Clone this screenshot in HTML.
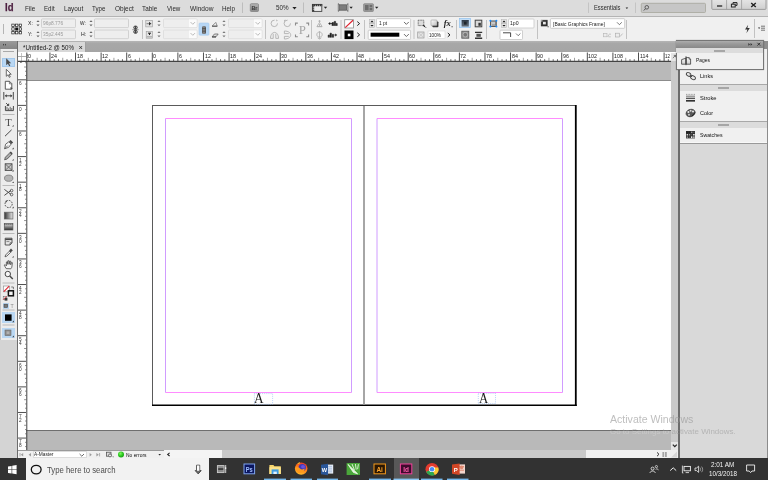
<!DOCTYPE html><html><head><meta charset="utf-8"><title>Untitled-2 @ 50% - InDesign</title><style>
*{box-sizing:border-box;margin:0;padding:0}
html,body{width:768px;height:480px;overflow:hidden;background:#fff}
body{position:relative;font-family:"Liberation Sans",sans-serif;font-size:7px;color:#222;line-height:1}
.a{position:absolute}
.t{position:absolute;white-space:nowrap;line-height:1;transform-origin:0 50%}
.s{font-family:"Liberation Serif",serif}
svg{position:absolute;overflow:visible}
#app{position:absolute;left:0;top:0;width:768px;height:480px;overflow:hidden;will-change:transform}
</style></head><body><div id="app">
<div class="a" style="left:0px;top:0px;width:768px;height:16px;background:#dcdcdc;"></div>
<div class="a" style="left:0px;top:15.9px;width:768px;height:24.9px;background:#f0f0f0;border-top:1px solid #b4b4b4;"></div>
<div class="a" style="left:0px;top:40.8px;width:768px;height:11.6px;background:#a6a6a6;background:linear-gradient(#b6b6b6,#a8a8a8 22%,#a5a5a5);"></div>
<div class="a" style="left:26px;top:61px;width:645px;height:20px;background:#b9b9b9;"></div>
<div class="a" style="left:26px;top:80px;width:645px;height:1px;background:#8c8c8c;"></div>
<div class="a" style="left:26px;top:81px;width:645px;height:350px;background:#ffffff;"></div>
<div class="a" style="left:26px;top:430px;width:645px;height:20px;background:#b9b9b9;border-top:1px solid #6e6e6e;"></div>
<div class="a" style="left:18px;top:52.5px;width:652.6px;height:9px;background:#ffffff;"></div>
<div class="a" style="left:17.8px;top:52.5px;width:8.7px;height:397.5px;background:#ffffff;"></div>
<svg style="left:0px;top:0px;" width="768" height="480" viewBox="0 0 768 480"><line x1="28.62" y1="59.2" x2="28.62" y2="61" stroke="#444" stroke-width="0.8"/><line x1="32.88" y1="59.2" x2="32.88" y2="61" stroke="#444" stroke-width="0.8"/><line x1="37.15" y1="57.8" x2="37.15" y2="61" stroke="#888" stroke-width="0.8"/><line x1="41.41" y1="59.2" x2="41.41" y2="61" stroke="#444" stroke-width="0.8"/><line x1="45.68" y1="59.2" x2="45.68" y2="61" stroke="#444" stroke-width="0.8"/><line x1="49.94" y1="52.5" x2="49.94" y2="61" stroke="#505050" stroke-width="1"/><line x1="54.21" y1="59.2" x2="54.21" y2="61" stroke="#444" stroke-width="0.8"/><line x1="58.47" y1="59.2" x2="58.47" y2="61" stroke="#444" stroke-width="0.8"/><line x1="62.74" y1="57.8" x2="62.74" y2="61" stroke="#888" stroke-width="0.8"/><line x1="67.00" y1="59.2" x2="67.00" y2="61" stroke="#444" stroke-width="0.8"/><line x1="71.27" y1="59.2" x2="71.27" y2="61" stroke="#444" stroke-width="0.8"/><line x1="75.53" y1="52.5" x2="75.53" y2="61" stroke="#505050" stroke-width="1"/><line x1="79.80" y1="59.2" x2="79.80" y2="61" stroke="#444" stroke-width="0.8"/><line x1="84.06" y1="59.2" x2="84.06" y2="61" stroke="#444" stroke-width="0.8"/><line x1="88.33" y1="57.8" x2="88.33" y2="61" stroke="#888" stroke-width="0.8"/><line x1="92.59" y1="59.2" x2="92.59" y2="61" stroke="#444" stroke-width="0.8"/><line x1="96.86" y1="59.2" x2="96.86" y2="61" stroke="#444" stroke-width="0.8"/><line x1="101.12" y1="52.5" x2="101.12" y2="61" stroke="#505050" stroke-width="1"/><line x1="105.39" y1="59.2" x2="105.39" y2="61" stroke="#444" stroke-width="0.8"/><line x1="109.65" y1="59.2" x2="109.65" y2="61" stroke="#444" stroke-width="0.8"/><line x1="113.92" y1="57.8" x2="113.92" y2="61" stroke="#888" stroke-width="0.8"/><line x1="118.18" y1="59.2" x2="118.18" y2="61" stroke="#444" stroke-width="0.8"/><line x1="122.45" y1="59.2" x2="122.45" y2="61" stroke="#444" stroke-width="0.8"/><line x1="126.71" y1="52.5" x2="126.71" y2="61" stroke="#505050" stroke-width="1"/><line x1="130.97" y1="59.2" x2="130.97" y2="61" stroke="#444" stroke-width="0.8"/><line x1="135.24" y1="59.2" x2="135.24" y2="61" stroke="#444" stroke-width="0.8"/><line x1="139.50" y1="57.8" x2="139.50" y2="61" stroke="#888" stroke-width="0.8"/><line x1="143.77" y1="59.2" x2="143.77" y2="61" stroke="#444" stroke-width="0.8"/><line x1="148.03" y1="59.2" x2="148.03" y2="61" stroke="#444" stroke-width="0.8"/><line x1="152.30" y1="52.5" x2="152.30" y2="61" stroke="#505050" stroke-width="1"/><line x1="156.56" y1="59.2" x2="156.56" y2="61" stroke="#444" stroke-width="0.8"/><line x1="160.83" y1="59.2" x2="160.83" y2="61" stroke="#444" stroke-width="0.8"/><line x1="165.09" y1="57.8" x2="165.09" y2="61" stroke="#888" stroke-width="0.8"/><line x1="169.36" y1="59.2" x2="169.36" y2="61" stroke="#444" stroke-width="0.8"/><line x1="173.62" y1="59.2" x2="173.62" y2="61" stroke="#444" stroke-width="0.8"/><line x1="177.89" y1="52.5" x2="177.89" y2="61" stroke="#505050" stroke-width="1"/><line x1="182.16" y1="59.2" x2="182.16" y2="61" stroke="#444" stroke-width="0.8"/><line x1="186.42" y1="59.2" x2="186.42" y2="61" stroke="#444" stroke-width="0.8"/><line x1="190.69" y1="57.8" x2="190.69" y2="61" stroke="#888" stroke-width="0.8"/><line x1="194.95" y1="59.2" x2="194.95" y2="61" stroke="#444" stroke-width="0.8"/><line x1="199.22" y1="59.2" x2="199.22" y2="61" stroke="#444" stroke-width="0.8"/><line x1="203.48" y1="52.5" x2="203.48" y2="61" stroke="#505050" stroke-width="1"/><line x1="207.75" y1="59.2" x2="207.75" y2="61" stroke="#444" stroke-width="0.8"/><line x1="212.01" y1="59.2" x2="212.01" y2="61" stroke="#444" stroke-width="0.8"/><line x1="216.28" y1="57.8" x2="216.28" y2="61" stroke="#888" stroke-width="0.8"/><line x1="220.54" y1="59.2" x2="220.54" y2="61" stroke="#444" stroke-width="0.8"/><line x1="224.81" y1="59.2" x2="224.81" y2="61" stroke="#444" stroke-width="0.8"/><line x1="229.07" y1="52.5" x2="229.07" y2="61" stroke="#505050" stroke-width="1"/><line x1="233.33" y1="59.2" x2="233.33" y2="61" stroke="#444" stroke-width="0.8"/><line x1="237.60" y1="59.2" x2="237.60" y2="61" stroke="#444" stroke-width="0.8"/><line x1="241.86" y1="57.8" x2="241.86" y2="61" stroke="#888" stroke-width="0.8"/><line x1="246.13" y1="59.2" x2="246.13" y2="61" stroke="#444" stroke-width="0.8"/><line x1="250.39" y1="59.2" x2="250.39" y2="61" stroke="#444" stroke-width="0.8"/><line x1="254.66" y1="52.5" x2="254.66" y2="61" stroke="#505050" stroke-width="1"/><line x1="258.93" y1="59.2" x2="258.93" y2="61" stroke="#444" stroke-width="0.8"/><line x1="263.19" y1="59.2" x2="263.19" y2="61" stroke="#444" stroke-width="0.8"/><line x1="267.46" y1="57.8" x2="267.46" y2="61" stroke="#888" stroke-width="0.8"/><line x1="271.72" y1="59.2" x2="271.72" y2="61" stroke="#444" stroke-width="0.8"/><line x1="275.99" y1="59.2" x2="275.99" y2="61" stroke="#444" stroke-width="0.8"/><line x1="280.25" y1="52.5" x2="280.25" y2="61" stroke="#505050" stroke-width="1"/><line x1="284.51" y1="59.2" x2="284.51" y2="61" stroke="#444" stroke-width="0.8"/><line x1="288.78" y1="59.2" x2="288.78" y2="61" stroke="#444" stroke-width="0.8"/><line x1="293.05" y1="57.8" x2="293.05" y2="61" stroke="#888" stroke-width="0.8"/><line x1="297.31" y1="59.2" x2="297.31" y2="61" stroke="#444" stroke-width="0.8"/><line x1="301.57" y1="59.2" x2="301.57" y2="61" stroke="#444" stroke-width="0.8"/><line x1="305.84" y1="52.5" x2="305.84" y2="61" stroke="#505050" stroke-width="1"/><line x1="310.11" y1="59.2" x2="310.11" y2="61" stroke="#444" stroke-width="0.8"/><line x1="314.37" y1="59.2" x2="314.37" y2="61" stroke="#444" stroke-width="0.8"/><line x1="318.64" y1="57.8" x2="318.64" y2="61" stroke="#888" stroke-width="0.8"/><line x1="322.90" y1="59.2" x2="322.90" y2="61" stroke="#444" stroke-width="0.8"/><line x1="327.17" y1="59.2" x2="327.17" y2="61" stroke="#444" stroke-width="0.8"/><line x1="331.43" y1="52.5" x2="331.43" y2="61" stroke="#505050" stroke-width="1"/><line x1="335.69" y1="59.2" x2="335.69" y2="61" stroke="#444" stroke-width="0.8"/><line x1="339.96" y1="59.2" x2="339.96" y2="61" stroke="#444" stroke-width="0.8"/><line x1="344.23" y1="57.8" x2="344.23" y2="61" stroke="#888" stroke-width="0.8"/><line x1="348.49" y1="59.2" x2="348.49" y2="61" stroke="#444" stroke-width="0.8"/><line x1="352.75" y1="59.2" x2="352.75" y2="61" stroke="#444" stroke-width="0.8"/><line x1="357.02" y1="52.5" x2="357.02" y2="61" stroke="#505050" stroke-width="1"/><line x1="361.28" y1="59.2" x2="361.28" y2="61" stroke="#444" stroke-width="0.8"/><line x1="365.55" y1="59.2" x2="365.55" y2="61" stroke="#444" stroke-width="0.8"/><line x1="369.81" y1="57.8" x2="369.81" y2="61" stroke="#888" stroke-width="0.8"/><line x1="374.08" y1="59.2" x2="374.08" y2="61" stroke="#444" stroke-width="0.8"/><line x1="378.34" y1="59.2" x2="378.34" y2="61" stroke="#444" stroke-width="0.8"/><line x1="382.61" y1="52.5" x2="382.61" y2="61" stroke="#505050" stroke-width="1"/><line x1="386.88" y1="59.2" x2="386.88" y2="61" stroke="#444" stroke-width="0.8"/><line x1="391.14" y1="59.2" x2="391.14" y2="61" stroke="#444" stroke-width="0.8"/><line x1="395.41" y1="57.8" x2="395.41" y2="61" stroke="#888" stroke-width="0.8"/><line x1="399.67" y1="59.2" x2="399.67" y2="61" stroke="#444" stroke-width="0.8"/><line x1="403.94" y1="59.2" x2="403.94" y2="61" stroke="#444" stroke-width="0.8"/><line x1="408.20" y1="52.5" x2="408.20" y2="61" stroke="#505050" stroke-width="1"/><line x1="412.47" y1="59.2" x2="412.47" y2="61" stroke="#444" stroke-width="0.8"/><line x1="416.73" y1="59.2" x2="416.73" y2="61" stroke="#444" stroke-width="0.8"/><line x1="421.00" y1="57.8" x2="421.00" y2="61" stroke="#888" stroke-width="0.8"/><line x1="425.26" y1="59.2" x2="425.26" y2="61" stroke="#444" stroke-width="0.8"/><line x1="429.53" y1="59.2" x2="429.53" y2="61" stroke="#444" stroke-width="0.8"/><line x1="433.79" y1="52.5" x2="433.79" y2="61" stroke="#505050" stroke-width="1"/><line x1="438.06" y1="59.2" x2="438.06" y2="61" stroke="#444" stroke-width="0.8"/><line x1="442.32" y1="59.2" x2="442.32" y2="61" stroke="#444" stroke-width="0.8"/><line x1="446.59" y1="57.8" x2="446.59" y2="61" stroke="#888" stroke-width="0.8"/><line x1="450.85" y1="59.2" x2="450.85" y2="61" stroke="#444" stroke-width="0.8"/><line x1="455.12" y1="59.2" x2="455.12" y2="61" stroke="#444" stroke-width="0.8"/><line x1="459.38" y1="52.5" x2="459.38" y2="61" stroke="#505050" stroke-width="1"/><line x1="463.64" y1="59.2" x2="463.64" y2="61" stroke="#444" stroke-width="0.8"/><line x1="467.91" y1="59.2" x2="467.91" y2="61" stroke="#444" stroke-width="0.8"/><line x1="472.18" y1="57.8" x2="472.18" y2="61" stroke="#888" stroke-width="0.8"/><line x1="476.44" y1="59.2" x2="476.44" y2="61" stroke="#444" stroke-width="0.8"/><line x1="480.70" y1="59.2" x2="480.70" y2="61" stroke="#444" stroke-width="0.8"/><line x1="484.97" y1="52.5" x2="484.97" y2="61" stroke="#505050" stroke-width="1"/><line x1="489.24" y1="59.2" x2="489.24" y2="61" stroke="#444" stroke-width="0.8"/><line x1="493.50" y1="59.2" x2="493.50" y2="61" stroke="#444" stroke-width="0.8"/><line x1="497.77" y1="57.8" x2="497.77" y2="61" stroke="#888" stroke-width="0.8"/><line x1="502.03" y1="59.2" x2="502.03" y2="61" stroke="#444" stroke-width="0.8"/><line x1="506.30" y1="59.2" x2="506.30" y2="61" stroke="#444" stroke-width="0.8"/><line x1="510.56" y1="52.5" x2="510.56" y2="61" stroke="#505050" stroke-width="1"/><line x1="514.83" y1="59.2" x2="514.83" y2="61" stroke="#444" stroke-width="0.8"/><line x1="519.09" y1="59.2" x2="519.09" y2="61" stroke="#444" stroke-width="0.8"/><line x1="523.36" y1="57.8" x2="523.36" y2="61" stroke="#888" stroke-width="0.8"/><line x1="527.62" y1="59.2" x2="527.62" y2="61" stroke="#444" stroke-width="0.8"/><line x1="531.88" y1="59.2" x2="531.88" y2="61" stroke="#444" stroke-width="0.8"/><line x1="536.15" y1="52.5" x2="536.15" y2="61" stroke="#505050" stroke-width="1"/><line x1="540.42" y1="59.2" x2="540.42" y2="61" stroke="#444" stroke-width="0.8"/><line x1="544.68" y1="59.2" x2="544.68" y2="61" stroke="#444" stroke-width="0.8"/><line x1="548.95" y1="57.8" x2="548.95" y2="61" stroke="#888" stroke-width="0.8"/><line x1="553.21" y1="59.2" x2="553.21" y2="61" stroke="#444" stroke-width="0.8"/><line x1="557.48" y1="59.2" x2="557.48" y2="61" stroke="#444" stroke-width="0.8"/><line x1="561.74" y1="52.5" x2="561.74" y2="61" stroke="#505050" stroke-width="1"/><line x1="566.00" y1="59.2" x2="566.00" y2="61" stroke="#444" stroke-width="0.8"/><line x1="570.27" y1="59.2" x2="570.27" y2="61" stroke="#444" stroke-width="0.8"/><line x1="574.53" y1="57.8" x2="574.53" y2="61" stroke="#888" stroke-width="0.8"/><line x1="578.80" y1="59.2" x2="578.80" y2="61" stroke="#444" stroke-width="0.8"/><line x1="583.07" y1="59.2" x2="583.07" y2="61" stroke="#444" stroke-width="0.8"/><line x1="587.33" y1="52.5" x2="587.33" y2="61" stroke="#505050" stroke-width="1"/><line x1="591.59" y1="59.2" x2="591.59" y2="61" stroke="#444" stroke-width="0.8"/><line x1="595.86" y1="59.2" x2="595.86" y2="61" stroke="#444" stroke-width="0.8"/><line x1="600.12" y1="57.8" x2="600.12" y2="61" stroke="#888" stroke-width="0.8"/><line x1="604.39" y1="59.2" x2="604.39" y2="61" stroke="#444" stroke-width="0.8"/><line x1="608.65" y1="59.2" x2="608.65" y2="61" stroke="#444" stroke-width="0.8"/><line x1="612.92" y1="52.5" x2="612.92" y2="61" stroke="#505050" stroke-width="1"/><line x1="617.19" y1="59.2" x2="617.19" y2="61" stroke="#444" stroke-width="0.8"/><line x1="621.45" y1="59.2" x2="621.45" y2="61" stroke="#444" stroke-width="0.8"/><line x1="625.72" y1="57.8" x2="625.72" y2="61" stroke="#888" stroke-width="0.8"/><line x1="629.98" y1="59.2" x2="629.98" y2="61" stroke="#444" stroke-width="0.8"/><line x1="634.25" y1="59.2" x2="634.25" y2="61" stroke="#444" stroke-width="0.8"/><line x1="638.51" y1="52.5" x2="638.51" y2="61" stroke="#505050" stroke-width="1"/><line x1="642.77" y1="59.2" x2="642.77" y2="61" stroke="#444" stroke-width="0.8"/><line x1="647.04" y1="59.2" x2="647.04" y2="61" stroke="#444" stroke-width="0.8"/><line x1="651.30" y1="57.8" x2="651.30" y2="61" stroke="#888" stroke-width="0.8"/><line x1="655.57" y1="59.2" x2="655.57" y2="61" stroke="#444" stroke-width="0.8"/><line x1="659.84" y1="59.2" x2="659.84" y2="61" stroke="#444" stroke-width="0.8"/><line x1="664.10" y1="52.5" x2="664.10" y2="61" stroke="#505050" stroke-width="1"/><line x1="668.37" y1="59.2" x2="668.37" y2="61" stroke="#444" stroke-width="0.8"/><line x1="25.0" y1="62.75" x2="26.4" y2="62.75" stroke="#777" stroke-width="0.8"/><line x1="24.099999999999998" y1="67.02" x2="26.4" y2="67.02" stroke="#777" stroke-width="0.8"/><line x1="25.0" y1="71.28" x2="26.4" y2="71.28" stroke="#777" stroke-width="0.8"/><line x1="25.0" y1="75.55" x2="26.4" y2="75.55" stroke="#777" stroke-width="0.8"/><line x1="18" y1="79.81" x2="26" y2="79.81" stroke="#505050" stroke-width="1"/><line x1="25.0" y1="84.08" x2="26.4" y2="84.08" stroke="#777" stroke-width="0.8"/><line x1="25.0" y1="88.34" x2="26.4" y2="88.34" stroke="#777" stroke-width="0.8"/><line x1="24.099999999999998" y1="92.61" x2="26.4" y2="92.61" stroke="#777" stroke-width="0.8"/><line x1="25.0" y1="96.87" x2="26.4" y2="96.87" stroke="#777" stroke-width="0.8"/><line x1="25.0" y1="101.14" x2="26.4" y2="101.14" stroke="#777" stroke-width="0.8"/><line x1="18" y1="105.40" x2="26" y2="105.40" stroke="#505050" stroke-width="1"/><line x1="25.0" y1="109.67" x2="26.4" y2="109.67" stroke="#777" stroke-width="0.8"/><line x1="25.0" y1="113.93" x2="26.4" y2="113.93" stroke="#777" stroke-width="0.8"/><line x1="24.099999999999998" y1="118.20" x2="26.4" y2="118.20" stroke="#777" stroke-width="0.8"/><line x1="25.0" y1="122.46" x2="26.4" y2="122.46" stroke="#777" stroke-width="0.8"/><line x1="25.0" y1="126.73" x2="26.4" y2="126.73" stroke="#777" stroke-width="0.8"/><line x1="18" y1="130.99" x2="26" y2="130.99" stroke="#505050" stroke-width="1"/><line x1="25.0" y1="135.25" x2="26.4" y2="135.25" stroke="#777" stroke-width="0.8"/><line x1="25.0" y1="139.52" x2="26.4" y2="139.52" stroke="#777" stroke-width="0.8"/><line x1="24.099999999999998" y1="143.78" x2="26.4" y2="143.78" stroke="#777" stroke-width="0.8"/><line x1="25.0" y1="148.05" x2="26.4" y2="148.05" stroke="#777" stroke-width="0.8"/><line x1="25.0" y1="152.31" x2="26.4" y2="152.31" stroke="#777" stroke-width="0.8"/><line x1="18" y1="156.58" x2="26" y2="156.58" stroke="#505050" stroke-width="1"/><line x1="25.0" y1="160.84" x2="26.4" y2="160.84" stroke="#777" stroke-width="0.8"/><line x1="25.0" y1="165.11" x2="26.4" y2="165.11" stroke="#777" stroke-width="0.8"/><line x1="24.099999999999998" y1="169.38" x2="26.4" y2="169.38" stroke="#777" stroke-width="0.8"/><line x1="25.0" y1="173.64" x2="26.4" y2="173.64" stroke="#777" stroke-width="0.8"/><line x1="25.0" y1="177.91" x2="26.4" y2="177.91" stroke="#777" stroke-width="0.8"/><line x1="18" y1="182.17" x2="26" y2="182.17" stroke="#505050" stroke-width="1"/><line x1="25.0" y1="186.44" x2="26.4" y2="186.44" stroke="#777" stroke-width="0.8"/><line x1="25.0" y1="190.70" x2="26.4" y2="190.70" stroke="#777" stroke-width="0.8"/><line x1="24.099999999999998" y1="194.97" x2="26.4" y2="194.97" stroke="#777" stroke-width="0.8"/><line x1="25.0" y1="199.23" x2="26.4" y2="199.23" stroke="#777" stroke-width="0.8"/><line x1="25.0" y1="203.50" x2="26.4" y2="203.50" stroke="#777" stroke-width="0.8"/><line x1="18" y1="207.76" x2="26" y2="207.76" stroke="#505050" stroke-width="1"/><line x1="25.0" y1="212.02" x2="26.4" y2="212.02" stroke="#777" stroke-width="0.8"/><line x1="25.0" y1="216.29" x2="26.4" y2="216.29" stroke="#777" stroke-width="0.8"/><line x1="24.099999999999998" y1="220.55" x2="26.4" y2="220.55" stroke="#777" stroke-width="0.8"/><line x1="25.0" y1="224.82" x2="26.4" y2="224.82" stroke="#777" stroke-width="0.8"/><line x1="25.0" y1="229.08" x2="26.4" y2="229.08" stroke="#777" stroke-width="0.8"/><line x1="18" y1="233.35" x2="26" y2="233.35" stroke="#505050" stroke-width="1"/><line x1="25.0" y1="237.62" x2="26.4" y2="237.62" stroke="#777" stroke-width="0.8"/><line x1="25.0" y1="241.88" x2="26.4" y2="241.88" stroke="#777" stroke-width="0.8"/><line x1="24.099999999999998" y1="246.15" x2="26.4" y2="246.15" stroke="#777" stroke-width="0.8"/><line x1="25.0" y1="250.41" x2="26.4" y2="250.41" stroke="#777" stroke-width="0.8"/><line x1="25.0" y1="254.68" x2="26.4" y2="254.68" stroke="#777" stroke-width="0.8"/><line x1="18" y1="258.94" x2="26" y2="258.94" stroke="#505050" stroke-width="1"/><line x1="25.0" y1="263.20" x2="26.4" y2="263.20" stroke="#777" stroke-width="0.8"/><line x1="25.0" y1="267.47" x2="26.4" y2="267.47" stroke="#777" stroke-width="0.8"/><line x1="24.099999999999998" y1="271.74" x2="26.4" y2="271.74" stroke="#777" stroke-width="0.8"/><line x1="25.0" y1="276.00" x2="26.4" y2="276.00" stroke="#777" stroke-width="0.8"/><line x1="25.0" y1="280.26" x2="26.4" y2="280.26" stroke="#777" stroke-width="0.8"/><line x1="18" y1="284.53" x2="26" y2="284.53" stroke="#505050" stroke-width="1"/><line x1="25.0" y1="288.79" x2="26.4" y2="288.79" stroke="#777" stroke-width="0.8"/><line x1="25.0" y1="293.06" x2="26.4" y2="293.06" stroke="#777" stroke-width="0.8"/><line x1="24.099999999999998" y1="297.32" x2="26.4" y2="297.32" stroke="#777" stroke-width="0.8"/><line x1="25.0" y1="301.59" x2="26.4" y2="301.59" stroke="#777" stroke-width="0.8"/><line x1="25.0" y1="305.85" x2="26.4" y2="305.85" stroke="#777" stroke-width="0.8"/><line x1="18" y1="310.12" x2="26" y2="310.12" stroke="#505050" stroke-width="1"/><line x1="25.0" y1="314.38" x2="26.4" y2="314.38" stroke="#777" stroke-width="0.8"/><line x1="25.0" y1="318.65" x2="26.4" y2="318.65" stroke="#777" stroke-width="0.8"/><line x1="24.099999999999998" y1="322.92" x2="26.4" y2="322.92" stroke="#777" stroke-width="0.8"/><line x1="25.0" y1="327.18" x2="26.4" y2="327.18" stroke="#777" stroke-width="0.8"/><line x1="25.0" y1="331.44" x2="26.4" y2="331.44" stroke="#777" stroke-width="0.8"/><line x1="18" y1="335.71" x2="26" y2="335.71" stroke="#505050" stroke-width="1"/><line x1="25.0" y1="339.98" x2="26.4" y2="339.98" stroke="#777" stroke-width="0.8"/><line x1="25.0" y1="344.24" x2="26.4" y2="344.24" stroke="#777" stroke-width="0.8"/><line x1="24.099999999999998" y1="348.51" x2="26.4" y2="348.51" stroke="#777" stroke-width="0.8"/><line x1="25.0" y1="352.77" x2="26.4" y2="352.77" stroke="#777" stroke-width="0.8"/><line x1="25.0" y1="357.04" x2="26.4" y2="357.04" stroke="#777" stroke-width="0.8"/><line x1="18" y1="361.30" x2="26" y2="361.30" stroke="#505050" stroke-width="1"/><line x1="25.0" y1="365.56" x2="26.4" y2="365.56" stroke="#777" stroke-width="0.8"/><line x1="25.0" y1="369.83" x2="26.4" y2="369.83" stroke="#777" stroke-width="0.8"/><line x1="24.099999999999998" y1="374.10" x2="26.4" y2="374.10" stroke="#777" stroke-width="0.8"/><line x1="25.0" y1="378.36" x2="26.4" y2="378.36" stroke="#777" stroke-width="0.8"/><line x1="25.0" y1="382.62" x2="26.4" y2="382.62" stroke="#777" stroke-width="0.8"/><line x1="18" y1="386.89" x2="26" y2="386.89" stroke="#505050" stroke-width="1"/><line x1="25.0" y1="391.15" x2="26.4" y2="391.15" stroke="#777" stroke-width="0.8"/><line x1="25.0" y1="395.42" x2="26.4" y2="395.42" stroke="#777" stroke-width="0.8"/><line x1="24.099999999999998" y1="399.69" x2="26.4" y2="399.69" stroke="#777" stroke-width="0.8"/><line x1="25.0" y1="403.95" x2="26.4" y2="403.95" stroke="#777" stroke-width="0.8"/><line x1="25.0" y1="408.21" x2="26.4" y2="408.21" stroke="#777" stroke-width="0.8"/><line x1="18" y1="412.48" x2="26" y2="412.48" stroke="#505050" stroke-width="1"/><line x1="25.0" y1="416.75" x2="26.4" y2="416.75" stroke="#777" stroke-width="0.8"/><line x1="25.0" y1="421.01" x2="26.4" y2="421.01" stroke="#777" stroke-width="0.8"/><line x1="24.099999999999998" y1="425.28" x2="26.4" y2="425.28" stroke="#777" stroke-width="0.8"/><line x1="25.0" y1="429.54" x2="26.4" y2="429.54" stroke="#777" stroke-width="0.8"/><line x1="25.0" y1="433.81" x2="26.4" y2="433.81" stroke="#777" stroke-width="0.8"/><line x1="18" y1="438.07" x2="26" y2="438.07" stroke="#505050" stroke-width="1"/><line x1="25.0" y1="442.34" x2="26.4" y2="442.34" stroke="#777" stroke-width="0.8"/><line x1="25.0" y1="446.60" x2="26.4" y2="446.60" stroke="#777" stroke-width="0.8"/><line x1="18" y1="56.5" x2="26" y2="56.5" stroke="#888" stroke-width="0.7"/><line x1="21.5" y1="53" x2="21.5" y2="61" stroke="#aaa" stroke-width="0.7"/><line x1="18" y1="61.4" x2="671" y2="61.4" stroke="#444" stroke-width="1.2"/><line x1="26.8" y1="52.5" x2="26.8" y2="450" stroke="#444" stroke-width="1"/></svg>
<div class="a" style="left:27px;top:52px;width:10px;height:9px;overflow:hidden"><div class="a" style="left:-27px;top:-52px;width:768px;height:480px">
<div class="t" style="left:24.6px;top:51px;height:10px;line-height:10px;font-size:5.6px;color:#222;transform:scaleX(0.950);">30</div>
</div></div>
<div class="t" style="left:51.04000000000001px;top:51px;height:10px;line-height:10px;font-size:5.6px;color:#222;transform:scaleX(0.950);">24</div>
<div class="t" style="left:76.63000000000001px;top:51px;height:10px;line-height:10px;font-size:5.6px;color:#222;transform:scaleX(0.950);">18</div>
<div class="t" style="left:102.22px;top:51px;height:10px;line-height:10px;font-size:5.6px;color:#222;transform:scaleX(0.950);">12</div>
<div class="t" style="left:127.81px;top:51px;height:10px;line-height:10px;font-size:5.6px;color:#222;transform:scaleX(0.950);">6</div>
<div class="t" style="left:153.4px;top:51px;height:10px;line-height:10px;font-size:5.6px;color:#222;transform:scaleX(0.950);">0</div>
<div class="t" style="left:178.99px;top:51px;height:10px;line-height:10px;font-size:5.6px;color:#222;transform:scaleX(0.950);">6</div>
<div class="t" style="left:204.58px;top:51px;height:10px;line-height:10px;font-size:5.6px;color:#222;transform:scaleX(0.950);">12</div>
<div class="t" style="left:230.17px;top:51px;height:10px;line-height:10px;font-size:5.6px;color:#222;transform:scaleX(0.950);">18</div>
<div class="t" style="left:255.76000000000002px;top:51px;height:10px;line-height:10px;font-size:5.6px;color:#222;transform:scaleX(0.950);">24</div>
<div class="t" style="left:281.35px;top:51px;height:10px;line-height:10px;font-size:5.6px;color:#222;transform:scaleX(0.950);">30</div>
<div class="t" style="left:306.94000000000005px;top:51px;height:10px;line-height:10px;font-size:5.6px;color:#222;transform:scaleX(0.950);">36</div>
<div class="t" style="left:332.53000000000003px;top:51px;height:10px;line-height:10px;font-size:5.6px;color:#222;transform:scaleX(0.950);">42</div>
<div class="t" style="left:358.12px;top:51px;height:10px;line-height:10px;font-size:5.6px;color:#222;transform:scaleX(0.950);">48</div>
<div class="t" style="left:383.71000000000004px;top:51px;height:10px;line-height:10px;font-size:5.6px;color:#222;transform:scaleX(0.950);">54</div>
<div class="t" style="left:409.30000000000007px;top:51px;height:10px;line-height:10px;font-size:5.6px;color:#222;transform:scaleX(0.950);">60</div>
<div class="t" style="left:434.89000000000004px;top:51px;height:10px;line-height:10px;font-size:5.6px;color:#222;transform:scaleX(0.950);">66</div>
<div class="t" style="left:460.48px;top:51px;height:10px;line-height:10px;font-size:5.6px;color:#222;transform:scaleX(0.950);">72</div>
<div class="t" style="left:486.07000000000005px;top:51px;height:10px;line-height:10px;font-size:5.6px;color:#222;transform:scaleX(0.950);">78</div>
<div class="t" style="left:511.66px;top:51px;height:10px;line-height:10px;font-size:5.6px;color:#222;transform:scaleX(0.950);">84</div>
<div class="t" style="left:537.2500000000001px;top:51px;height:10px;line-height:10px;font-size:5.6px;color:#222;transform:scaleX(0.950);">90</div>
<div class="t" style="left:562.84px;top:51px;height:10px;line-height:10px;font-size:5.6px;color:#222;transform:scaleX(0.950);">96</div>
<div class="t" style="left:588.43px;top:51px;height:10px;line-height:10px;font-size:5.6px;color:#222;transform:scaleX(0.950);">102</div>
<div class="t" style="left:614.0200000000001px;top:51px;height:10px;line-height:10px;font-size:5.6px;color:#222;transform:scaleX(0.950);">108</div>
<div class="t" style="left:639.61px;top:51px;height:10px;line-height:10px;font-size:5.6px;color:#222;transform:scaleX(0.950);">114</div>
<div class="a" style="left:665px;top:52px;width:5px;height:9px;overflow:hidden"><div class="a" style="left:-665px;top:-52px;width:768px;height:480px">
<div class="t" style="left:665.4px;top:51px;height:10px;line-height:10px;font-size:5.6px;color:#222;transform:scaleX(0.800);">120</div>
</div></div>
<div class="t" style="left:19.4px;top:78px;height:10px;line-height:10px;font-size:5.6px;color:#333;transform:scaleX(0.850);">6</div>
<div class="t" style="left:19.4px;top:104px;height:10px;line-height:10px;font-size:5.6px;color:#333;transform:scaleX(0.850);">0</div>
<div class="t" style="left:19.4px;top:129px;height:10px;line-height:10px;font-size:5.6px;color:#333;transform:scaleX(0.850);">6</div>
<div class="t" style="left:19.4px;top:155px;height:10px;line-height:10px;font-size:5.6px;color:#333;transform:scaleX(0.850);">1</div>
<div class="t" style="left:19.4px;top:159px;height:10px;line-height:10px;font-size:5.6px;color:#333;transform:scaleX(0.850);">2</div>
<div class="t" style="left:19.4px;top:181px;height:10px;line-height:10px;font-size:5.6px;color:#333;transform:scaleX(0.850);">1</div>
<div class="t" style="left:19.4px;top:184px;height:10px;line-height:10px;font-size:5.6px;color:#333;transform:scaleX(0.850);">8</div>
<div class="t" style="left:19.4px;top:206px;height:10px;line-height:10px;font-size:5.6px;color:#333;transform:scaleX(0.850);">2</div>
<div class="t" style="left:19.4px;top:210px;height:10px;line-height:10px;font-size:5.6px;color:#333;transform:scaleX(0.850);">4</div>
<div class="t" style="left:19.4px;top:232px;height:10px;line-height:10px;font-size:5.6px;color:#333;transform:scaleX(0.850);">3</div>
<div class="t" style="left:19.4px;top:236px;height:10px;line-height:10px;font-size:5.6px;color:#333;transform:scaleX(0.850);">0</div>
<div class="t" style="left:19.4px;top:257px;height:10px;line-height:10px;font-size:5.6px;color:#333;transform:scaleX(0.850);">3</div>
<div class="t" style="left:19.4px;top:261px;height:10px;line-height:10px;font-size:5.6px;color:#333;transform:scaleX(0.850);">6</div>
<div class="t" style="left:19.4px;top:283px;height:10px;line-height:10px;font-size:5.6px;color:#333;transform:scaleX(0.850);">4</div>
<div class="t" style="left:19.4px;top:287px;height:10px;line-height:10px;font-size:5.6px;color:#333;transform:scaleX(0.850);">2</div>
<div class="t" style="left:19.4px;top:308px;height:10px;line-height:10px;font-size:5.6px;color:#333;transform:scaleX(0.850);">4</div>
<div class="t" style="left:19.4px;top:312px;height:10px;line-height:10px;font-size:5.6px;color:#333;transform:scaleX(0.850);">8</div>
<div class="t" style="left:19.4px;top:334px;height:10px;line-height:10px;font-size:5.6px;color:#333;transform:scaleX(0.850);">5</div>
<div class="t" style="left:19.4px;top:338px;height:10px;line-height:10px;font-size:5.6px;color:#333;transform:scaleX(0.850);">4</div>
<div class="t" style="left:19.4px;top:360px;height:10px;line-height:10px;font-size:5.6px;color:#333;transform:scaleX(0.850);">6</div>
<div class="t" style="left:19.4px;top:364px;height:10px;line-height:10px;font-size:5.6px;color:#333;transform:scaleX(0.850);">0</div>
<div class="t" style="left:19.4px;top:385px;height:10px;line-height:10px;font-size:5.6px;color:#333;transform:scaleX(0.850);">6</div>
<div class="t" style="left:19.4px;top:389px;height:10px;line-height:10px;font-size:5.6px;color:#333;transform:scaleX(0.850);">6</div>
<div class="t" style="left:19.4px;top:411px;height:10px;line-height:10px;font-size:5.6px;color:#333;transform:scaleX(0.850);">7</div>
<div class="t" style="left:19.4px;top:415px;height:10px;line-height:10px;font-size:5.6px;color:#333;transform:scaleX(0.850);">2</div>
<div class="t" style="left:19.4px;top:436px;height:10px;line-height:10px;font-size:5.6px;color:#333;transform:scaleX(0.850);">7</div>
<div class="t" style="left:19.4px;top:440px;height:10px;line-height:10px;font-size:5.6px;color:#333;transform:scaleX(0.850);">8</div>
<div class="a" style="left:18px;top:61.5px;width:8px;height:3px;overflow:hidden"><div class="t" style="left:1.5px;top:-2.6px;font-size:5.2px;color:#444;transform:scaleX(.8)">2</div></div>
<svg style="left:0px;top:0px;" width="768" height="480" viewBox="0 0 768 480"><rect x="152.5" y="105.5" width="423" height="299.5" fill="#fff" stroke="none"/><line x1="152.5" y1="105" x2="152.5" y2="406" stroke="#5a5a5a" stroke-width="1"/><line x1="152" y1="105.5" x2="576" y2="105.5" stroke="#5a5a5a" stroke-width="1"/><line x1="575.8" y1="105" x2="575.8" y2="406" stroke="#000" stroke-width="1.8"/><line x1="152" y1="405.2" x2="576.7" y2="405.2" stroke="#000" stroke-width="1.6"/><line x1="364" y1="106" x2="364" y2="404.5" stroke="#a6a6a6" stroke-width="2"/><line x1="165.5" y1="118.5" x2="351.5" y2="118.5" stroke="#ff8cff" stroke-width="1"/><line x1="165.5" y1="392.5" x2="351.5" y2="392.5" stroke="#ff8cff" stroke-width="1"/><line x1="165.5" y1="118.5" x2="165.5" y2="392.5" stroke="#d09cff" stroke-width="1"/><line x1="351.5" y1="118.5" x2="351.5" y2="392.5" stroke="#d09cff" stroke-width="1"/><line x1="377" y1="118.5" x2="562.5" y2="118.5" stroke="#ff8cff" stroke-width="1"/><line x1="377" y1="392.5" x2="562.5" y2="392.5" stroke="#ff8cff" stroke-width="1"/><line x1="377" y1="118.5" x2="377" y2="392.5" stroke="#d09cff" stroke-width="1"/><line x1="562.5" y1="118.5" x2="562.5" y2="392.5" stroke="#d09cff" stroke-width="1"/></svg>
<div class="a" style="left:0px;top:41px;width:18px;height:417px;background:#d4d4d4;"></div>
<div class="a" style="left:16.7px;top:41px;width:1.2px;height:417px;background:#6c6c6c;"></div>
<div class="a" style="left:0px;top:41px;width:16.5px;height:7.5px;background:#8f8f8f;background:linear-gradient(#9a9a9a,#858585);"></div>
<div class="a" style="left:0px;top:48.5px;width:16.5px;height:291px;background:#ececec;border-left:1.5px solid #c4c4c4;"></div>
<div class="a" style="left:3px;top:50.6px;width:10.5px;height:1px;background:#a9a9a9;"></div>
<svg style="left:0px;top:0px;" width="20" height="60" viewBox="0 0 20 60"><path d="M3 43.8l1.2 1-1.2 1zM5 43.8l1.2 1-1.2 1z" fill="#333"/></svg>
<div class="a" style="left:2px;top:57.5px;width:12.5px;height:9.5px;background:#b9d7f3;border:0.5px solid #a3c8ec;"></div>
<div class="a" style="left:3px;top:303px;width:5.5px;height:5.5px;background:#b9d7f3;"></div>
<div class="a" style="left:2px;top:312px;width:12.5px;height:10.5px;background:#b9d7f3;"></div>
<div class="a" style="left:2px;top:327.5px;width:12.5px;height:10px;background:#b9d7f3;"></div>
<svg style="left:0px;top:0px;" width="20" height="480" viewBox="0 0 20 480"><path d="M2.500 114.5h12" stroke="#b4b4b4" stroke-width=".9"/><path d="M2.500 185.5h12" stroke="#b4b4b4" stroke-width=".9"/><path d="M2.500 233.5h12" stroke="#b4b4b4" stroke-width=".9"/><path d="M2.500 283h12" stroke="#b4b4b4" stroke-width=".9"/><path d="M2.500 310h12" stroke="#b4b4b4" stroke-width=".9"/><path d="M2.500 325h12" stroke="#b4b4b4" stroke-width=".9"/><path d="M6.2 58.2v7l1.7-1.5 1.3 2.6 1.1-.5-1.3-2.6h2.2z" fill="#4a4a4a"/><path d="M6.3 69.3v7l1.7-1.5 1.3 2.6 1-.5-1.3-2.6h2.2z" fill="#fff" stroke="#4a4a4a" stroke-width=".8"/><path d="M5.3 81.3h4.2l2.3 2.3v5.6h-6.5z" fill="#fff" stroke="#4a4a4a" stroke-width=".9"/><path d="M9.4 81.4v2.4h2.3" fill="none" stroke="#4a4a4a" stroke-width=".7"/><path d="M10.5 87l2.3 1.3-2.3 1.2z" fill="#4a4a4a"/><path d="M3.8 92v7.6M13.3 92v7.6M5.2 95.8h6.8" stroke="#4a4a4a" stroke-width="1" fill="none"/><path d="M4.8 95.8l2-1.6v3.2zM12.4 95.8l-2-1.6v3.2z" fill="#4a4a4a"/><path d="M5.4 106v4.6h8V106" fill="none" stroke="#4a4a4a" stroke-width="1"/><path d="M7 110v-3.2M8.6 110v-1.6M10.2 110v-3.2M11.8 110v-2" stroke="#4a4a4a" stroke-width=".8"/><path d="M6 103l2.4 2.4M8.8 105.6l-.2-1.8-1.6 1.6z" stroke="#4a4a4a" stroke-width=".9" fill="#4a4a4a"/><text x="8.4" y="125.6" font-family="Liberation Serif,serif" font-size="10.5" text-anchor="middle" fill="#4a4a4a">T</text><path d="M13.6 125v1.6h-1.5z" fill="#222"/><path d="M5 136.2l6.6-6.4" stroke="#4a4a4a" stroke-width="1"/><path d="M4.6 148.8l1-4.6 3.2-2.4 2.3 2.3-2.4 3.2zM4.8 148.6l3-3" fill="#f4f4f4" stroke="#4a4a4a" stroke-width=".8"/><path d="M9 141.6l1.6-1.6 2.5 2.5-1.6 1.6z" fill="#4a4a4a"/><path d="M13.6 147.6v1.6h-1.5z" fill="#222"/><path d="M4.6 159.8l.8-2.6 5-5 1.8 1.8-5 5z" fill="#aaa" stroke="#4a4a4a" stroke-width=".8"/><path d="M9.6 152.6l1.2-1.2 1.8 1.8-1.2 1.2z" fill="#4a4a4a"/><path d="M13.6 159v1.6h-1.5z" fill="#222"/><rect x="5.2" y="163.8" width="6.8" height="6.6" fill="#c8c8c8" stroke="#4a4a4a" stroke-width=".9"/><path d="M5.2 163.8l6.8 6.6M12 163.8l-6.8 6.6" stroke="#4a4a4a" stroke-width=".7"/><path d="M13.6 170v1.6h-1.5z" fill="#222"/><ellipse cx="8.7" cy="178.2" rx="4.2" ry="3.1" fill="#b4b4b4" stroke="#777" stroke-width=".8"/><path d="M13.6 181.4v1.6h-1.5z" fill="#222"/><path d="M4.4 189.4l6.6 5M4.4 195.4l6.6-5" stroke="#4a4a4a" stroke-width="1"/><circle cx="11.6" cy="190.6" r="1.3" fill="none" stroke="#4a4a4a" stroke-width=".8"/><circle cx="11.6" cy="194.6" r="1.3" fill="none" stroke="#4a4a4a" stroke-width=".8"/><circle cx="8.6" cy="204" r="3.6" fill="none" stroke="#4a4a4a" stroke-width="1" stroke-dasharray="1.6 1.2"/><path d="M5 201l2.4-.4-1 2z" fill="#4a4a4a"/><path d="M13.6 206.6v1.6h-1.5z" fill="#222"/><defs><linearGradient id="g1" x1="0" x2="1"><stop offset="0" stop-color="#333"/><stop offset="1" stop-color="#e8e8e8"/></linearGradient><linearGradient id="g2" x1="0" x2="0" y1="0" y2="1"><stop offset="0" stop-color="#e4e4e4"/><stop offset="1" stop-color="#2c2c2c"/></linearGradient></defs><rect x="4.3" y="212.2" width="8.6" height="6.8" fill="url(#g1)" stroke="#666" stroke-width=".7"/><rect x="4.3" y="223.6" width="8.6" height="6.4" fill="url(#g2)" stroke="#555" stroke-width=".7"/><path d="M4.3 224.3h8.6" stroke="#444" stroke-width="1" stroke-dasharray="1.2 .8"/><path d="M5.2 238.2h6.8v4.6l-2 2.2h-4.8z" fill="#e8e8e8" stroke="#4a4a4a" stroke-width=".9"/><path d="M5.2 239.4h6.8" stroke="#4a4a4a" stroke-width="1.4"/><path d="M12 242.8h-2v2.2" fill="none" stroke="#4a4a4a" stroke-width=".7"/><path d="M6.4 241.6h3" stroke="#4a4a4a" stroke-width=".6"/><path d="M5 256.8l.6-1.8 4-4 1.2 1.2-4 4z" fill="#f0f0f0" stroke="#4a4a4a" stroke-width=".8"/><path d="M9 250.8l2-2.2 1.8 1.8-2.2 2z" fill="#4a4a4a"/><path d="M13.6 256v1.6h-1.5z" fill="#222"/><path d="M6.2 268.6l-2-3.4 1-.6 1.2 1.4v-4l1-.2.4 2.6v-3.6l1.1-.1.3 3.6.5-3.2 1 .1v3.6l.8-2.4.9.3-.6 4.6-1 1.5z" fill="#f4f4f4" stroke="#4a4a4a" stroke-width=".8" stroke-linejoin="round"/><circle cx="7.8" cy="274" r="2.7" fill="#f6f6f6" stroke="#4a4a4a" stroke-width="1"/><path d="M9.8 276l3 3" stroke="#4a4a4a" stroke-width="1.5"/><rect x="3.6" y="286" width="5.8" height="5.8" fill="#fff" stroke="#888" stroke-width=".6"/><path d="M3.8 291.6l5.4-5.4" stroke="#e0202c" stroke-width="1.1"/><rect x="8.4" y="290.8" width="5" height="5" fill="#f4f4f4" stroke="#111" stroke-width="1.5"/><path d="M11.2 287h2.2v2.2" fill="none" stroke="#4a4a4a" stroke-width=".7"/><rect x="3.2" y="296.4" width="3" height="3" fill="#fff" stroke="#555" stroke-width=".5"/><rect x="4.6" y="297.8" width="2.8" height="2.8" fill="#333"/><path d="M3.2 299.6l3.4-3.4" stroke="#e0202c" stroke-width=".8"/><rect x="4" y="304.2" width="3.6" height="3.2" fill="#777" stroke="#444" stroke-width=".6"/><text x="12" y="308.2" font-family="Liberation Sans,sans-serif" font-size="5.2" text-anchor="middle" fill="#8a8a8a">T</text><rect x="5" y="314.4" width="6.6" height="6.4" fill="#000"/><path d="M13.8 320.6v1.6h-1.5z" fill="#222"/><rect x="5" y="330" width="6" height="5.6" fill="#8e8e8e" stroke="#6a6a6a" stroke-width=".6"/><rect x="6.6" y="331.4" width="2.8" height="2.6" fill="#b0b0b0"/><path d="M13.8 335.6v1.6h-1.5z" fill="#222"/></svg>
<div class="a" style="left:671px;top:52.5px;width:7.6px;height:397.5px;background:#cacaca;"></div>
<div class="a" style="left:671px;top:52.5px;width:7.6px;height:8.8px;background:#e6e6e6;"></div>
<div class="a" style="left:671px;top:441.5px;width:7.6px;height:8.5px;background:#e6e6e6;"></div>
<svg style="left:671px;top:440px;" width="8" height="10" viewBox="0 0 8 10"><path d="M1.8 4.6l2 2 2-2" fill="none" stroke="#2a2a2a" stroke-width="1.300"/></svg>
<svg style="left:671px;top:52px;" width="8" height="10" viewBox="0 0 8 10"><path d="M1.800 6l2.600-2.400M2.800 3.400h1.800v1.800" fill="none" stroke="#555" stroke-width=".8"/></svg>
<div class="a" style="left:18px;top:450px;width:661px;height:8.3px;background:#f0f0f0;"></div>
<div class="a" style="left:18px;top:450px;width:146px;height:0.7px;background:#9a9a9a;"></div>
<div class="a" style="left:164px;top:450.3px;width:58px;height:7.7px;background:#f4f4f4;"></div>
<div class="a" style="left:222px;top:450.3px;width:364px;height:7.7px;background:#c9c9c9;"></div>
<div class="a" style="left:586px;top:450.3px;width:69px;height:7.7px;background:#f0f0f0;"></div>
<div class="a" style="left:33px;top:450.5px;width:53.5px;height:7px;background:#ffffff;border:0.500px solid #dcdcdc;"></div>
<div class="t" style="left:34.2px;top:449px;height:10px;line-height:10px;font-size:5.4px;color:#222;transform:scaleX(0.890);">A-Master</div>
<svg style="left:0px;top:0px;" width="768" height="480" viewBox="0 0 768 480"><path d="M20 453v3.4" stroke="#9c9c9c" stroke-width=".8"/><path d="M23.2 453v3.4l-2.4-1.7z" fill="#9c9c9c"/><path d="M31 453v3.4l-2.4-1.7z" fill="#9c9c9c"/><path d="M79.6 454l2.2 2.2 2.2-2.2" fill="none" stroke="#444" stroke-width=".8"/><path d="M89.6 453v3.4l2.2-1.7z" fill="#9c9c9c"/><path d="M96.4 453v3.4l2.4-1.7z" fill="#9c9c9c"/><path d="M99.6 453v3.4" stroke="#9c9c9c" stroke-width=".8"/><rect x="106.4" y="452.2" width="4.6" height="4" fill="#ddd" stroke="#555" stroke-width=".8"/><circle cx="110" cy="455.4" r="1.5" fill="#eee" stroke="#444" stroke-width=".7"/><path d="M112.4 456.6h1.4l-.7.9z" fill="#333"/><defs><radialGradient id="gd" cx=".4" cy=".35" r=".7"><stop offset="0" stop-color="#7dfa5a"/><stop offset=".6" stop-color="#27c41c"/><stop offset="1" stop-color="#149a10"/></radialGradient></defs><circle cx="121" cy="454.5" r="3" fill="url(#gd)"/><path d="M158.4 454h2.6l-1.3 1.5z" fill="#222"/><path d="M169.600 452.800l-1.900 1.600 1.900 1.600" fill="none" stroke="#222" stroke-width="1.100"/><path d="M657 452.4l2 1.9-2 1.9" fill="none" stroke="#333" stroke-width="1"/><rect x="662.4" y="452" width="1.8" height="5" fill="#a4a4a4"/><rect x="665" y="452" width="1.8" height="5" fill="#a4a4a4"/><path d="M677 451.5v6h-6z" fill="#d8d8d8"/></svg>
<div class="t" style="left:126px;top:450px;height:10px;line-height:10px;font-size:5.6px;color:#111;transform:scaleX(0.878);">No errors</div>
<div class="a" style="left:679px;top:41px;width:89px;height:417.3px;background:#d9d9d9;"></div>
<div class="a" style="left:678.4px;top:41px;width:1.7px;height:417.3px;background:#6c6c6c;"></div>
<div class="a" style="left:680px;top:41px;width:88px;height:7.5px;background:#8f8f8f;"></div>
<div class="a" style="left:680px;top:48.5px;width:88px;height:22px;background:#f0f0f0;"></div>
<div class="a" style="left:680px;top:69.5px;width:88px;height:14.5px;background:#f0f0f0;"></div>
<div class="t" style="left:700px;top:71px;height:10px;line-height:10px;font-size:5.8px;color:#111;transform:scaleX(0.960);">Links</div>
<div class="a" style="left:680px;top:84px;width:88px;height:1px;background:#a8a8a8;"></div>
<div class="a" style="left:680px;top:85px;width:88px;height:6px;background:#dcdcdc;"></div>
<div class="a" style="left:718px;top:87.4px;width:11px;height:1.6px;background:#a6a6a6;"></div>
<div class="a" style="left:680px;top:91px;width:88px;height:30px;background:#f0f0f0;"></div>
<div class="t" style="left:700px;top:93px;height:10px;line-height:10px;font-size:5.8px;color:#111;transform:scaleX(0.984);">Stroke</div>
<div class="t" style="left:700px;top:108px;height:10px;line-height:10px;font-size:5.8px;color:#111;transform:scaleX(0.952);">Color</div>
<div class="a" style="left:680px;top:121px;width:88px;height:1px;background:#a8a8a8;"></div>
<div class="a" style="left:680px;top:122px;width:88px;height:5.5px;background:#dcdcdc;"></div>
<div class="a" style="left:718px;top:124.2px;width:11px;height:1.6px;background:#a6a6a6;"></div>
<div class="a" style="left:680px;top:127.5px;width:88px;height:15.5px;background:#f0f0f0;"></div>
<div class="t" style="left:700px;top:130px;height:10px;line-height:10px;font-size:5.8px;color:#111;transform:scaleX(0.895);">Swatches</div>
<div class="a" style="left:680px;top:142px;width:88px;height:1px;background:#f8f8f8;"></div>
<div class="a" style="left:680px;top:143px;width:88px;height:1px;background:#999999;"></div>
<div class="a" style="left:767px;top:41px;width:1px;height:417px;background:#8c8c8c;"></div>
<svg style="left:0px;top:0px;" width="768" height="480" viewBox="0 0 768 480"><ellipse cx="688.6" cy="74.4" rx="2.4" ry="1.7" fill="#e8e8e8" stroke="#444" stroke-width=".9" transform="rotate(30 688.6 74.4)"/><ellipse cx="693" cy="77.6" rx="2.6" ry="1.8" fill="#e8e8e8" stroke="#444" stroke-width=".9" transform="rotate(30 693 77.6)"/><path d="M689.6 75.2l2.4 1.6" stroke="#444" stroke-width="1"/><path d="M686 94.4h9" stroke="#666" stroke-width=".6" stroke-dasharray="1 .6"/><path d="M686 96.2h9" stroke="#555" stroke-width=".8"/><path d="M686 98.3h9" stroke="#444" stroke-width="1.2"/><path d="M686 100.8h9" stroke="#333" stroke-width="1.7"/><ellipse cx="690.6" cy="113" rx="4.6" ry="3.6" fill="#5a5a5a" stroke="#333" stroke-width=".7" transform="rotate(-20 690.6 113)"/><circle cx="688.4" cy="112" r="1" fill="#eee"/><circle cx="690.6" cy="110.8" r="1" fill="#ddd"/><circle cx="693" cy="111.4" r="1" fill="#eee"/><circle cx="689" cy="114.8" r="1" fill="#ccc"/><path d="M692 116l3-3.4" stroke="#222" stroke-width="1"/><rect x="686" y="131" width="9" height="7.4" fill="#2e2e2e"/><rect x="686.6" y="131.6" width="1.4" height="1.5" fill="#222"/><rect x="686.6" y="134.0" width="1.4" height="1.5" fill="#ddd"/><rect x="686.6" y="136.4" width="1.4" height="1.5" fill="#999"/><rect x="688.8" y="131.6" width="1.4" height="1.5" fill="#222"/><rect x="688.8" y="134.0" width="1.4" height="1.5" fill="#999"/><rect x="688.8" y="136.4" width="1.4" height="1.5" fill="#555"/><rect x="691.0" y="131.6" width="1.4" height="1.5" fill="#999"/><rect x="691.0" y="134.0" width="1.4" height="1.5" fill="#555"/><rect x="691.0" y="136.4" width="1.4" height="1.5" fill="#fff"/><rect x="693.2" y="131.6" width="1.4" height="1.5" fill="#555"/><rect x="693.2" y="134.0" width="1.4" height="1.5" fill="#fff"/><rect x="693.2" y="136.4" width="1.4" height="1.5" fill="#ddd"/></svg>
<div class="a" style="left:675.5px;top:40.3px;width:88.7px;height:29.5px;background:#f0f0f0;border:1px solid #767676;box-shadow:0 0 1px rgba(0,0,0,.35);"></div>
<div class="a" style="left:676.3px;top:41px;width:87.2px;height:7px;background:#8c8c8c;background:linear-gradient(#adadad,#9a9a9a 40%,#888888);"></div>
<div class="a" style="left:676.3px;top:48px;width:87.2px;height:5.2px;background:#dcdcdc;"></div>
<div class="a" style="left:714px;top:50px;width:11px;height:1.6px;background:#a6a6a6;"></div>
<div class="t" style="left:695.7px;top:55px;height:10px;line-height:10px;font-size:5.8px;color:#111;transform:scaleX(0.845);">Pages</div>
<svg style="left:0px;top:0px;" width="768" height="480" viewBox="0 0 768 480"><path d="M748.4 43l1.6 1.4-1.6 1.4zM750.6 43l1.6 1.4-1.6 1.4z" fill="#2c2c2c"/><path d="M757.4 42.8l2.8 2.8M760.2 42.8l-2.8 2.8" stroke="#2c2c2c" stroke-width=".9"/><defs><linearGradient id="pg" x1="0" x2="0" y1="0" y2="1"><stop offset="0" stop-color="#fafafa"/><stop offset="1" stop-color="#cfcfcf"/></linearGradient></defs><path d="M681.600 59.600l4.400-1.400v6h-4.400zM686 57.600h3l1.600 1.500v5.100h-4.600z" fill="url(#pg)" stroke="#3c3c3c" stroke-width=".8" stroke-linejoin="round"/><path d="M686 56.200v9" stroke="#3c3c3c" stroke-width=".8"/><path d="M689 57.600v1.600h1.600" fill="none" stroke="#3c3c3c" stroke-width=".6"/></svg>
<div class="a" style="left:0px;top:458.3px;width:768px;height:21.7px;background:#323232;"></div>
<div class="a" style="left:25.5px;top:458.3px;width:183.5px;height:21.7px;background:#f2f2f2;"></div>
<div class="a" style="left:393.5px;top:458.3px;width:25.5px;height:21.7px;background:#585858;"></div>
<div class="t" style="left:47px;top:463px;height:14px;line-height:14px;font-size:8.8px;color:#4c4c4c;transform:scaleX(0.881);">Type here to search</div>
<svg style="left:0px;top:0px;" width="768" height="480" viewBox="0 0 768 480"><path d="M8 466.4l3.6-.5v3.5H8zM12.2 465.8l4.4-.7v4.3h-4.4zM8 470h3.6v3.5L8 473zM12.2 470h4.4v4.3l-4.4-.7z" fill="#fff"/><ellipse cx="36.2" cy="469.6" rx="4.9" ry="4.3" fill="none" stroke="#111" stroke-width="1.3"/><path d="M195.300 470.600h5.800l-2.900 3.300z" fill="#6a6a6a"/><path d="M196.600 465.200h3.100v5.400h1.500l-3 3.300-3-3.300h1.400z" fill="none" stroke="#3c3c3c" stroke-width=".9" stroke-linejoin="round"/><rect x="197" y="465.600" width="2.300" height="5" fill="#fdfdfd"/><rect x="217.400" y="465.600" width="6.700" height="7" fill="#8a8a8a" stroke="#cdcdcd" stroke-width=".9"/><rect x="218.200" y="468.300" width="5.100" height="1.500" fill="#2c2c2c"/><path d="M225.700 465v8" stroke="#cfcfcf" stroke-width="1"/><rect x="225.200" y="467.300" width="1" height="1.700" fill="#fff"/><rect x="244" y="464" width="10.6" height="9.8" fill="#0b1660" stroke="#7ea4ee" stroke-width="1"/><text x="249.3" y="471.6" font-family="Liberation Sans,sans-serif" font-weight="bold" font-size="6.4" text-anchor="middle" fill="#9fc0ff" textLength="7" lengthAdjust="spacingAndGlyphs">Ps</text><path d="M269.4 465h4l1 1.2h6.4v7.8h-11.4z" fill="#f7d56b"/><path d="M269.4 467.2h11.4v6.8h-11.4z" fill="#fbe28c"/><rect x="271.6" y="469.4" width="7" height="4.6" fill="#3e9be0"/><rect x="273.4" y="471.6" width="3.4" height="2.4" fill="#dff0ff"/><defs><linearGradient id="ff" x1=".7" y1="0" x2=".3" y2="1"><stop offset="0" stop-color="#e8322c"/><stop offset=".45" stop-color="#ff7a18"/><stop offset="1" stop-color="#ffc12e"/></linearGradient></defs><ellipse cx="301.200" cy="468.600" rx="6.300" ry="6.100" fill="url(#ff)"/><ellipse cx="302.200" cy="467.600" rx="3.700" ry="3.500" fill="#4138b8"/><ellipse cx="303" cy="466.800" rx="2" ry="1.800" fill="#6a52e0"/><path d="M295.600 467.600c1.600-.8 3.400-.4 4.400.8 1 1.200 3 1.400 4.800.2-.4 2.800-2.600 4.600-5 4.600-2.600 0-4.200-2.400-4.200-5.600z" fill="#ff9a1c"/><path d="M297.200 464c.6-1 1.800-1.800 3-2-.6.600-.8 1.200-.6 1.800z" fill="#ffb52a"/><rect x="326" y="464.6" width="7.2" height="9" fill="#e4ebf5"/><path d="M327 466.4h5M327 468.2h5M327 470h5M327 471.8h5" stroke="#8aa4d0" stroke-width=".6"/><path d="M321 464.8l7-1v11.4l-7-1z" fill="#2a5699"/><text x="324.5" y="471.6" font-family="Liberation Sans,sans-serif" font-weight="bold" font-size="5.6" text-anchor="middle" fill="#fff">W</text><rect x="346.6" y="463" width="13.4" height="12" fill="#4aa63a"/><path d="M348 464.4l9.6 9.4-4.2-1.4zM352 464l2.4 6M355.4 464l.8 5.6M358.4 464.2l-.8 5" stroke="#e8f6e0" stroke-width=".9" fill="#e8f6e0"/><rect x="374" y="464" width="11.4" height="9.8" fill="#2a1703" stroke="#f59a1b" stroke-width="1"/><text x="379.7" y="471.6" font-family="Liberation Sans,sans-serif" font-weight="bold" font-size="6.4" text-anchor="middle" fill="#ffa62b">Ai</text><rect x="400.4" y="464" width="11.4" height="9.8" fill="#3f0a2d" stroke="#f0409a" stroke-width="1"/><text x="406.1" y="471.6" font-family="Liberation Sans,sans-serif" font-weight="bold" font-size="6.4" text-anchor="middle" fill="#ff5fae">Id</text><ellipse cx="432" cy="469.2" rx="6.5" ry="6.2" fill="#e33b2e"/><path d="M432 469.2l-5.9 2.6a6.5 6.2 0 0 0 8.8 3.2z" fill="#2da94f"/><path d="M432 469.2l2.9 5.8a6.5 6.2 0 0 0 3.4-7.6h-6z" fill="#fcc934"/><ellipse cx="432" cy="469.2" rx="3" ry="2.9" fill="#fff"/><ellipse cx="432" cy="469.2" rx="2.3" ry="2.2" fill="#4a8af4"/><rect x="457.6" y="464.4" width="7.4" height="9.2" fill="#f2d5cc"/><path d="M459 466.6h5M459 470.2h5" stroke="#d8664a" stroke-width=".7"/><circle cx="461.6" cy="467.4" r="1.8" fill="#e08a72"/><path d="M452 464.6l7.6-1.2v11.6l-7.6-1.2z" fill="#d24625"/><text x="455.8" y="471.8" font-family="Liberation Sans,sans-serif" font-weight="bold" font-size="6" text-anchor="middle" fill="#fff">P</text><rect x="264" y="478.6" width="22" height="1.4" fill="#76b9ed"/><rect x="290.5" y="478.6" width="21.5" height="1.4" fill="#76b9ed"/><rect x="317" y="478.6" width="21" height="1.4" fill="#76b9ed"/><rect x="369" y="478.6" width="22" height="1.4" fill="#76b9ed"/><rect x="393.5" y="478.6" width="25.5" height="1.4" fill="#8cc8f5"/><rect x="421" y="478.6" width="21.5" height="1.4" fill="#76b9ed"/><rect x="447" y="478.6" width="21.5" height="1.4" fill="#76b9ed"/><circle cx="652.6" cy="468.6" r="1.5" fill="none" stroke="#f2f2f2" stroke-width=".8"/><path d="M650 473c0-2.6 5.2-2.6 5.2 0" fill="none" stroke="#f2f2f2" stroke-width=".8"/><circle cx="656.4" cy="466.6" r="1.1" fill="none" stroke="#f2f2f2" stroke-width=".7"/><path d="M655.6 469.4c1-.8 2.6-.6 2.8.8" fill="none" stroke="#f2f2f2" stroke-width=".7"/><path d="M670.2 470.6l3-2.8 3 2.8" fill="none" stroke="#f2f2f2" stroke-width="1"/><rect x="684" y="466.4" width="6.4" height="4.4" fill="none" stroke="#f2f2f2" stroke-width=".9"/><path d="M682.4 465.6v7.4h1M685.6 472.6h3.4" stroke="#f2f2f2" stroke-width=".8" fill="none"/><path d="M695 468h1.6l2-1.8v6.2l-2-1.8H695z" fill="none" stroke="#f2f2f2" stroke-width=".8"/><path d="M700 467.6c.8 1 .8 2.600 0 3.600M701.600 466.600c1.400 1.800 1.400 3.800 0 5.600" fill="none" stroke="#bbb" stroke-width=".7"/><path d="M746.600 465h8v6h-2.600l-1.400 1.600-1.400-1.600h-2.600z" fill="none" stroke="#f2f2f2" stroke-width=".9"/></svg>
<div class="t" style="left:710.8px;top:459px;height:11px;line-height:11px;font-size:6.5px;color:#f4f4f4;transform:scaleX(0.981);">2:01 AM</div>
<div class="t" style="left:708.9px;top:468px;height:11px;line-height:11px;font-size:6.8px;color:#f4f4f4;transform:scaleX(0.922);">10/3/2018</div>
<div class="t" style="left:609.6px;top:411px;height:16px;line-height:16px;font-size:10.5px;color:rgba(150,150,150,.62);transform:scaleX(1.006);">Activate Windows</div>
<div class="a" style="left:600px;top:420px;width:71px;height:10.500px;overflow:hidden"><div class="a" style="left:-600px;top:-420px;width:768px;height:480px">
<div class="t" style="left:609.6px;top:425px;height:13px;line-height:13px;font-size:8px;color:rgba(150,150,150,.55);transform:scaleX(0.995);">Go to Settings to activate Windows.</div>
</div></div>
<div class="a" style="left:600px;top:430.500px;width:71px;height:12px;overflow:hidden"><div class="a" style="left:-600px;top:-430.500px;width:768px;height:480px">
<div class="t" style="left:609.6px;top:425px;height:13px;line-height:13px;font-size:8px;color:rgba(225,225,225,.4);transform:scaleX(0.995);">Go to Settings to activate Windows.</div>
</div></div>
<div class="a" style="left:671px;top:420px;width:97px;height:24px;overflow:hidden"><div class="a" style="left:-671px;top:-420px;width:768px;height:480px">
<div class="t" style="left:609.6px;top:425px;height:13px;line-height:13px;font-size:8px;color:rgba(150,150,150,.55);transform:scaleX(0.995);">Go to Settings to activate Windows.</div>
</div></div>
<div class="t" style="left:4.8px;top:-1px;height:16px;line-height:16px;font-size:10.9px;color:#4e2142;font-weight:bold;transform:scaleX(0.878);-webkit-text-stroke:.25px #4e2142;">Id</div>
<div class="t" style="left:25px;top:3px;height:11px;line-height:11px;font-size:7px;color:#2a2a2a;transform:scaleX(0.904);">File</div>
<div class="t" style="left:44px;top:3px;height:11px;line-height:11px;font-size:7px;color:#2a2a2a;transform:scaleX(0.879);">Edit</div>
<div class="t" style="left:64px;top:3px;height:11px;line-height:11px;font-size:7px;color:#2a2a2a;transform:scaleX(0.914);">Layout</div>
<div class="t" style="left:92px;top:3px;height:11px;line-height:11px;font-size:7px;color:#2a2a2a;transform:scaleX(0.876);">Type</div>
<div class="t" style="left:114.6px;top:3px;height:11px;line-height:11px;font-size:7px;color:#2a2a2a;transform:scaleX(0.929);">Object</div>
<div class="t" style="left:142.4px;top:3px;height:11px;line-height:11px;font-size:7px;color:#2a2a2a;transform:scaleX(0.908);">Table</div>
<div class="t" style="left:167px;top:3px;height:11px;line-height:11px;font-size:7px;color:#2a2a2a;transform:scaleX(0.884);">View</div>
<div class="t" style="left:190px;top:3px;height:11px;line-height:11px;font-size:7px;color:#2a2a2a;transform:scaleX(0.940);">Window</div>
<div class="t" style="left:222.4px;top:3px;height:11px;line-height:11px;font-size:7px;color:#2a2a2a;transform:scaleX(0.896);">Help</div>
<svg style="left:0px;top:0px;" width="768" height="20" viewBox="0 0 768 20"><path d="M242.500 2.500v10.500M303.500 2.500v10.500" stroke="#bdbdbd" stroke-width="1"/><defs><linearGradient id="br" x1="0" x2="0" y1="0" y2="1"><stop offset="0" stop-color="#b4b4b4"/><stop offset="1" stop-color="#8a8a8a"/></linearGradient></defs><rect x="250.300" y="3.700" width="8.200" height="7.800" rx="1" fill="url(#br)" stroke="#7c7c7c" stroke-width=".7"/><text x="254.400" y="9.900" font-family="Liberation Sans,sans-serif" font-weight="bold" font-size="5.400" text-anchor="middle" fill="#3a3a3a">Br</text><path d="M292.400 7h4.200l-2.100 2.400z" fill="#222"/><rect x="312.400" y="4.400" width="9.400" height="7" fill="#ececec" stroke="#444" stroke-width=".9"/><path d="M312 5.200h10.200" stroke="#3a3a3a" stroke-width="2.200" stroke-dasharray="1.500 .5"/><path d="M313.200 4.400v7.200" stroke="#3a3a3a" stroke-width="2" stroke-dasharray="1.300 .6"/><path d="M323.800 6.800h3.400l-1.700 2z" fill="#222"/><rect x="339.600" y="4.800" width="7" height="5.400" fill="#7c7c7c" stroke="#555" stroke-width=".7"/><path d="M338 3.600l1.600 1.200M348.200 3.600l-1.600 1.200M338 11.400l1.600-1.200M348.200 11.400l-1.600-1.200M338.300 3.600v7.800M347.900 3.600v7.800" stroke="#555" stroke-width=".7"/><path d="M349.400 6.800h3.400l-1.700 2z" fill="#222"/><rect x="363.600" y="3.700" width="9.800" height="7.800" rx=".8" fill="#9c9c9c" stroke="#777" stroke-width=".6"/><rect x="365" y="5" width="3.600" height="5.200" fill="#6c6c6c"/><rect x="369.600" y="5" width="2.600" height="2.200" fill="#6c6c6c"/><rect x="369.600" y="8" width="2.600" height="2.200" fill="#6c6c6c"/><path d="M375 6.800h3.400l-1.700 2z" fill="#222"/><path d="M588.500 2.500v10.500M635.500 2.500v10.500" stroke="#c4c4c4" stroke-width="1"/><path d="M625.600 7.600h2.600l-1.300 1.500z" fill="#222"/><rect x="641.300" y="3.300" width="64.200" height="9.200" rx="1" fill="#c6c6c6" stroke="#a6a69c" stroke-width=".8"/><circle cx="646.800" cy="7.300" r="1.800" fill="none" stroke="#444" stroke-width=".8"/><path d="M645.500 8.700l-1.700 1.800" stroke="#444" stroke-width=".9"/><defs><linearGradient id="wc" x1="0" x2="0" y1="0" y2="1"><stop offset="0" stop-color="#e6e6e6"/><stop offset="1" stop-color="#cfcfcf"/></linearGradient></defs><path d="M711.800 -1h54.200v9.400q0 1-1 1h-52.200q-1 0-1-1z" fill="url(#wc)" stroke="#8e8e8e" stroke-width=".8"/><path d="M726.600 0v9.400M741.600 0v9.400" stroke="#9a9a9a" stroke-width=".8"/><path d="M717 6h5.200" stroke="#222" stroke-width="1.300"/><rect x="731.400" y="4.200" width="3.800" height="2.800" fill="none" stroke="#222" stroke-width="1"/><path d="M733 4v-1.400h4v2.800h-1.600" fill="none" stroke="#222" stroke-width="1"/><path d="M751.200 3l4.600 4M755.800 3l-4.600 4" stroke="#222" stroke-width="1.400"/></svg>
<div class="t" style="left:275.6px;top:2px;height:11px;line-height:11px;font-size:6.8px;color:#2a2a2a;transform:scaleX(0.926);">50%</div>
<div class="t" style="left:593.8px;top:2px;height:11px;line-height:11px;font-size:6.8px;color:#2a2a2a;transform:scaleX(0.852);">Essentials</div>
<div class="a" style="left:18px;top:41.7px;width:68px;height:10.5px;background:#d8d8d8;border-right:0.600px solid #a0a0a0;"></div>
<div class="t" style="left:23.3px;top:42px;height:11px;line-height:11px;font-size:6.6px;color:#1a1a1a;transform:scaleX(0.936);">*Untitled-2 @ 50%</div>
<svg style="left:78px;top:44px;" width="6" height="8" viewBox="0 0 6 8"><path d="M1.300 2l2.800 3M4.100 2l-2.800 3" stroke="#2a2a2a" stroke-width=".8"/></svg>
<svg style="left:0px;top:0px;" width="768" height="44" viewBox="0 0 768 44"><path d="M3.500 24v10" stroke="#b4b4b4" stroke-width="1"/><rect x="11.80" y="24.10" width="2.400" height="2.400" fill="#fff" stroke="#222" stroke-width=".7"/><rect x="11.80" y="27.80" width="2.400" height="2.400" fill="#fff" stroke="#222" stroke-width=".7"/><rect x="11.80" y="31.50" width="2.400" height="2.400" fill="#fff" stroke="#222" stroke-width=".7"/><rect x="15.50" y="24.10" width="2.400" height="2.400" fill="#fff" stroke="#222" stroke-width=".7"/><rect x="15.20" y="27.50" width="3" height="3" fill="#111"/><rect x="15.50" y="31.50" width="2.400" height="2.400" fill="#fff" stroke="#222" stroke-width=".7"/><rect x="19.20" y="24.10" width="2.400" height="2.400" fill="#fff" stroke="#222" stroke-width=".7"/><rect x="19.20" y="27.80" width="2.400" height="2.400" fill="#fff" stroke="#222" stroke-width=".7"/><rect x="19.20" y="31.50" width="2.400" height="2.400" fill="#fff" stroke="#222" stroke-width=".7"/><path d="M14.600 25.200h.8M18.400 25.200h.8M14.600 32.800h.8M18.400 32.800h.8M13 26.800v.8M13 30.600v.8M20.600 26.800v.8M20.600 30.600v.8" stroke="#222" stroke-width=".8"/><rect x="41.500" y="18.9" width="34" height="8.700" rx=".8" fill="#eeeeee" stroke="#c9c9c9" stroke-width=".8"/><rect x="94.500" y="18.9" width="34" height="8.700" rx=".8" fill="#eeeeee" stroke="#c9c9c9" stroke-width=".8"/><path d="M36.4 22.0h3.200l-1.600-1.700zM36.4 24.599999999999998h3.200l-1.600 1.700z" fill="#666"/><path d="M89.4 22.0h3.200l-1.600-1.700zM89.4 24.599999999999998h3.200l-1.600 1.700z" fill="#666"/><rect x="163.5" y="18.9" width="33.500" height="8.700" rx=".8" fill="#eeeeee" stroke="#dadada" stroke-width=".8"/><rect x="189.0" y="19.4" width="7.600" height="7.700" fill="#fbfbfb"/><path d="M190.60000000000002 22.099999999999998l2.2 2.2l2.2 -2.2" fill="none" stroke="#aaa" stroke-width=".8"/><path d="M157.4 22.0h3.200l-1.600-1.700zM157.4 24.599999999999998h3.200l-1.600 1.700z" fill="#777"/><rect x="228.5" y="18.9" width="33.500" height="8.700" rx=".8" fill="#eeeeee" stroke="#dadada" stroke-width=".8"/><rect x="254.0" y="19.4" width="7.600" height="7.700" fill="#fbfbfb"/><path d="M255.60000000000002 22.099999999999998l2.2 2.2l2.2 -2.2" fill="none" stroke="#aaa" stroke-width=".8"/><path d="M222.4 22.0h3.200l-1.600-1.700zM222.4 24.599999999999998h3.200l-1.600 1.700z" fill="#777"/><rect x="41.500" y="30" width="34" height="8.700" rx=".8" fill="#eeeeee" stroke="#c9c9c9" stroke-width=".8"/><rect x="94.500" y="30" width="34" height="8.700" rx=".8" fill="#eeeeee" stroke="#c9c9c9" stroke-width=".8"/><path d="M36.4 33.0h3.200l-1.600-1.700zM36.4 35.6h3.200l-1.600 1.700z" fill="#666"/><path d="M89.4 33.0h3.200l-1.600-1.700zM89.4 35.6h3.200l-1.600 1.700z" fill="#666"/><rect x="163.5" y="30" width="33.500" height="8.700" rx=".8" fill="#eeeeee" stroke="#dadada" stroke-width=".8"/><rect x="189.0" y="30.5" width="7.600" height="7.700" fill="#fbfbfb"/><path d="M190.60000000000002 33.1l2.2 2.2l2.2 -2.2" fill="none" stroke="#aaa" stroke-width=".8"/><path d="M157.4 33.0h3.200l-1.600-1.700zM157.4 35.6h3.200l-1.600 1.700z" fill="#777"/><rect x="228.5" y="30" width="33.500" height="8.700" rx=".8" fill="#eeeeee" stroke="#dadada" stroke-width=".8"/><rect x="254.0" y="30.5" width="7.600" height="7.700" fill="#fbfbfb"/><path d="M255.60000000000002 33.1l2.2 2.2l2.2 -2.2" fill="none" stroke="#aaa" stroke-width=".8"/><path d="M222.4 33.0h3.200l-1.600-1.700zM222.4 35.6h3.200l-1.600 1.700z" fill="#777"/><path d="M135.500 26v7.400" stroke="#444" stroke-width="1.800"/><ellipse cx="135.500" cy="27.500" rx="1.900" ry="1.500" fill="none" stroke="#444" stroke-width=".9"/><ellipse cx="135.500" cy="31.800" rx="1.900" ry="1.500" fill="none" stroke="#444" stroke-width=".9"/><path d="M132.200 29.700h6.600" stroke="#666" stroke-width=".6"/><path d="M142.5 20v19" stroke="#c2c2c2" stroke-width="1"/><rect x="145.800" y="20.300" width="6.600" height="6.600" fill="#e2e2e2" stroke="#9a9a9a" stroke-width=".6"/><path d="M149.600 22.200v3M149.600 23.700h1.600" stroke="#222" stroke-width="1"/><path d="M146.600 23.700h2.600" stroke="#555" stroke-width=".7"/><rect x="146.200" y="31.600" width="6.200" height="6.600" fill="#e2e2e2" stroke="#9a9a9a" stroke-width=".6"/><path d="M148 33.200h3M149.500 33.200v1.800" stroke="#222" stroke-width="1"/><path d="M146.600 36.800h5.400" stroke="#aaa" stroke-width="1.200"/><rect x="199" y="23" width="10" height="12.200" rx="1" fill="#b7d6f4" stroke="#a6cbef" stroke-width=".6"/><defs><linearGradient id="cy" x1="0" x2="1"><stop offset="0" stop-color="#5a5a5a"/><stop offset=".5" stop-color="#8a8a8a"/><stop offset="1" stop-color="#4a4a4a"/></linearGradient></defs><rect x="202" y="26" width="4" height="8" rx="1.600" fill="url(#cy)"/><path d="M202.400 28.600h3.200M202.400 31.200h3.200" stroke="#3a3a3a" stroke-width=".6"/><path d="M212.200 26h5l-1.400-3.600z" fill="none" stroke="#666" stroke-width=".7"/><path d="M212 26.300h5.400" stroke="#444" stroke-width=".8"/><path d="M212.200 36.800l2.200-2.800h3.800l-2.200 2.800z" fill="#ddd" stroke="#555" stroke-width=".7"/><path d="M212 37h4" stroke="#333" stroke-width=".9"/><path d="M265.5 20v19" stroke="#c2c2c2" stroke-width="1"/><circle cx="274.300" cy="23.400" r="3.200" fill="none" stroke="#b0b0b0" stroke-width=".9" stroke-dasharray="15 5"/><path d="M276 19.600l1.800.6-1.200 1.400z" fill="#b0b0b0"/><circle cx="287.300" cy="23.400" r="3.200" fill="none" stroke="#b0b0b0" stroke-width=".9" stroke-dasharray="15 5"/><path d="M285.600 19.600l-1.800.6 1.200 1.400z" fill="#b0b0b0"/><path d="M270.500 38.400c0-8 8-8 8 0M273.200 38.400v-4.600M275.800 38.400v-4.600M270.500 38.400h2.700M275.800 38.400h2.700" fill="none" stroke="#b0b0b0" stroke-width=".9"/><path d="M284.400 31c8.400 0 8.400 8 0 8M284.400 33.600h4.400M284.400 36.400h4.400M284.400 31v2.600M284.400 36.400v2.600" fill="none" stroke="#b0b0b0" stroke-width=".9"/><path d="M295.500 25.400v-2.300h2.300M306.300 23.100h2.300v2.300M295.500 34.400v2.300h2.300M306.300 36.700h2.300v-2.300" fill="none" stroke="#8c8c8c" stroke-width="1.100"/><text x="302.300" y="33.900" font-family="Liberation Serif,serif" font-size="12.800" text-anchor="middle" fill="#a6a6a6">P</text><path d="M311.5 20v19" stroke="#c2c2c2" stroke-width="1"/><path d="M319.500 20.400v2M319.500 22.400l-2.600 4.200h5.200z M317 26.600h5M319.500 24v2.600" fill="none" stroke="#b0b0b0" stroke-width=".9"/><circle cx="319.500" cy="21.200" r="1" fill="#b0b0b0"/><path d="M319.500 31.200v7.600M316.800 34.600c0-3.400 5.400-3.400 5.400 0 0 3.400-5.400 3.400-5.400 0M317.600 37.800l1.900 1.200 1.900-1.200" fill="none" stroke="#b0b0b0" stroke-width=".9"/><path d="M328.200 23.600l2-1.600v3.200z" fill="#222"/><path d="M330 23.600h2" stroke="#222" stroke-width=".9"/><path d="M332 25.800v-3.200h1.600v3.200M334.200 25.800v-4.400h1.400v4.400M336.200 25.800v-2.400h1v2.400" fill="#222" stroke="#222" stroke-width=".6"/><path d="M337.200 35l-2 1.600v-3.200z" fill="#222"/><path d="M328.200 37.400v-2.400h1.200v2.400M330 37.400v-4.200h1.400v4.200M332.200 37.400v-3h1.400v3M334 35h1.400" fill="#222" stroke="#222" stroke-width=".6"/><path d="M341 20v19" stroke="#c2c2c2" stroke-width="1"/><rect x="344.700" y="19.700" width="8.800" height="8.300" fill="#fff" stroke="#8e8e8e" stroke-width=".8"/><path d="M345.200 27.600l7.800-7.400" stroke="#e0222e" stroke-width="1.200"/><rect x="344.500" y="30.500" width="9" height="8.600" fill="#000"/><rect x="347.800" y="33.700" width="2.600" height="2.600" fill="#fff"/><path d="M357.300 21.600l2.300 2-2.300 2M357.300 32.800l2.300 2-2.300 2" fill="none" stroke="#222" stroke-width="1"/><path d="M364.5 20v19" stroke="#c2c2c2" stroke-width="1"/><rect x="369.600" y="19.400" width="4.800" height="4" fill="#e4e4e4" stroke="#b0b0b0" stroke-width=".5"/><rect x="369.600" y="23.600" width="4.800" height="4" fill="#e4e4e4" stroke="#b0b0b0" stroke-width=".5"/><path d="M370.4 22.3h3.200l-1.600-1.700zM370.4 24.9h3.200l-1.600 1.700z" fill="#111"/><rect x="376.400" y="18.700" width="34.200" height="8.900" rx=".8" fill="#fff" stroke="#c4c4c4" stroke-width=".8"/><path d="M404.0 21.95l2.4 2.4l2.4 -2.4" fill="none" stroke="#444" stroke-width=".8"/><rect x="368.200" y="30.200" width="42.400" height="9.200" rx=".8" fill="#fff" stroke="#c4c4c4" stroke-width=".8"/><rect x="370.600" y="32.700" width="28.700" height="4" fill="#000"/><path d="M404.0 34.1l2.4 2.4l2.4 -2.4" fill="none" stroke="#444" stroke-width=".8"/><path d="M414 20v19" stroke="#c2c2c2" stroke-width="1"/><rect x="418.200" y="20.200" width="5.600" height="5.400" fill="#dcdcdc" stroke="#555" stroke-width=".8" stroke-dasharray="1 .5"/><path d="M423.200 25l1.800 1.800" stroke="#222" stroke-width="1.100"/><path d="M425.200 27.400h1.200v.6h-1.200z" fill="#222"/><rect x="432.400" y="21.400" width="6" height="5.800" rx=".8" fill="#333"/><defs><linearGradient id="sh" x1="0" x2="1" y1="0" y2="1"><stop offset="0" stop-color="#fff"/><stop offset="1" stop-color="#bbb"/></linearGradient></defs><rect x="431" y="20" width="6" height="5.800" rx=".8" fill="url(#sh)" stroke="#888" stroke-width=".5"/><text x="447.300" y="26.400" font-family="Liberation Serif,serif" font-style="italic" font-weight="bold" font-size="7.400" text-anchor="middle" fill="#222" textLength="7.200" lengthAdjust="spacingAndGlyphs">fx</text><path d="M451.600 26.200h1v1h-1z" fill="#222"/><rect x="417.700" y="32" width="6.300" height="6" fill="#e4e4e4" stroke="#999" stroke-width=".7"/><path d="M417.700 32l6.300 6M424 32l-6.300 6" stroke="#bbb" stroke-width=".6"/><rect x="428" y="31" width="17" height="7.400" fill="#fff" stroke="#d0d0d0" stroke-width=".5"/><path d="M447.800 33l2.200 1.900-2.200 1.900" fill="none" stroke="#222" stroke-width="1"/><path d="M456.5 20v19" stroke="#c2c2c2" stroke-width="1"/><rect x="459.600" y="18.600" width="10.800" height="9" fill="#c4def6" stroke="#8fc0f0" stroke-width=".7"/><defs><linearGradient id="tw1" x1="0" x2="0" y1="0" y2="1"><stop offset="0" stop-color="#2e3a48"/><stop offset="1" stop-color="#66707a"/></linearGradient></defs><rect x="461.600" y="20" width="7.200" height="6.600" fill="url(#tw1)"/><rect x="464" y="21.600" width="2.600" height="3" fill="#20262c"/><rect x="475.200" y="20.200" width="6.600" height="6.600" fill="#d8d8d8" stroke="#444" stroke-width="1"/><rect x="478.400" y="22.800" width="2.400" height="3" fill="#333"/><rect x="461.800" y="31.200" width="7" height="7" fill="#9a9a9a" stroke="#555" stroke-width=".8"/><circle cx="465.300" cy="34.700" r="2.300" fill="#777" stroke="#ccc" stroke-width=".6"/><path d="M475 32.400h7.200M475 38.200h7.200" stroke="#333" stroke-width="1.400"/><rect x="476.400" y="33.800" width="4.400" height="3" fill="#555"/><path d="M486.5 20v19" stroke="#c2c2c2" stroke-width="1"/><rect x="490.600" y="21" width="5.600" height="5.400" fill="#c8c8c8" stroke="#444" stroke-width=".9"/><path d="M492 25h3.600v-3.600" fill="none" stroke="#777" stroke-width=".8"/><circle cx="490.4" cy="20.8" r="1" fill="#1a8cff"/><circle cx="496.4" cy="20.8" r="1" fill="#1a8cff"/><circle cx="490.4" cy="26.6" r="1" fill="#1a8cff"/><circle cx="496.4" cy="26.6" r="1" fill="#1a8cff"/><rect x="501.600" y="19.400" width="4.800" height="4" fill="#e4e4e4" stroke="#b0b0b0" stroke-width=".5"/><rect x="501.600" y="23.600" width="4.800" height="4" fill="#e4e4e4" stroke="#b0b0b0" stroke-width=".5"/><path d="M502.4 22.3h3.200l-1.600-1.700zM502.4 24.9h3.200l-1.600 1.700z" fill="#111"/><rect x="508.500" y="19" width="25.500" height="9" rx=".8" fill="#fff" stroke="#c8c8c8" stroke-width=".8"/><rect x="500" y="30.200" width="22.500" height="9.300" rx=".8" fill="#fff" stroke="#c4c4c4" stroke-width=".8"/><path d="M503 32.800h7.600v4.200" fill="none" stroke="#333" stroke-width=".9"/><path d="M516.0 33.5l2.2 2.2l2.2 -2.2" fill="none" stroke="#555" stroke-width=".8"/><path d="M537.5 20v19" stroke="#c2c2c2" stroke-width="1"/><rect x="541.200" y="20.200" width="6" height="5.800" fill="#333" stroke="#222" stroke-width=".6"/><rect x="543" y="21.800" width="2.800" height="2.600" fill="#e8e8e8"/><path d="M541.200 20.200h1.200v1.200h-1.200z" fill="#eee"/><path d="M547.600 26.200h1v1h-1z" fill="#222"/><rect x="550.400" y="18.700" width="74.300" height="9.600" rx=".8" fill="#fff" stroke="#c0c0c0" stroke-width=".8"/><path d="M617.0 22.299999999999997l2.4 2.4l2.4 -2.4" fill="none" stroke="#555" stroke-width=".8"/><rect x="603.400" y="33.400" width="3.600" height="3.400" fill="#ececec" stroke="#b4b4b4" stroke-width=".6"/><path d="M607.600 37l2-3.200 1.400.6M608.400 36.800h2.400" fill="none" stroke="#b4b4b4" stroke-width=".7"/><rect x="615.400" y="33.200" width="4" height="3.800" fill="#ececec" stroke="#a8a8a8" stroke-width=".6"/><path d="M620 36.600l2.600-3" stroke="#b4b4b4" stroke-width=".8"/><path d="M626.5 20v19" stroke="#c2c2c2" stroke-width="1"/><path d="M748.200 24.800l-3.200 4.600h2.400l-1 3.800 3.400-5.200h-2.400z" fill="#333"/><path d="M754.5 19v19" stroke="#c2c2c2" stroke-width="1"/><path d="M758 27.600h2.200l-1.100 1.300z" fill="#222"/><path d="M761 26.200h4M761 28.200h4M761 30.200h4" stroke="#555" stroke-width=".8"/></svg>
<div class="t" style="left:28.2px;top:18px;height:10px;line-height:10px;font-size:5.8px;color:#222;transform:scaleX(0.876);">X:</div>
<div class="t" style="left:28.2px;top:29px;height:10px;line-height:10px;font-size:5.8px;color:#222;transform:scaleX(0.853);">Y:</div>
<div class="t" style="left:80.4px;top:18px;height:10px;line-height:10px;font-size:5.8px;color:#222;transform:scaleX(0.831);">W:</div>
<div class="t" style="left:80.8px;top:29px;height:10px;line-height:10px;font-size:5.8px;color:#222;transform:scaleX(0.897);">H:</div>
<div class="t" style="left:43.2px;top:18px;height:10px;line-height:10px;font-size:5.8px;color:#9a9a9a;transform:scaleX(0.835);">96p8.776</div>
<div class="t" style="left:43.2px;top:29px;height:10px;line-height:10px;font-size:5.8px;color:#9a9a9a;transform:scaleX(0.835);">35p2.445</div>
<div class="t" style="left:379.2px;top:18px;height:10px;line-height:10px;font-size:5.8px;color:#222;transform:scaleX(0.848);">1 pt</div>
<div class="t" style="left:429.4px;top:30px;height:10px;line-height:10px;font-size:5.8px;color:#222;transform:scaleX(0.809);">100%</div>
<div class="t" style="left:510px;top:18px;height:10px;line-height:10px;font-size:5.8px;color:#222;transform:scaleX(0.889);">1p0</div>
<div class="t" style="left:552.8px;top:19px;height:10px;line-height:10px;font-size:6px;color:#222;transform:scaleX(0.826);">[Basic Graphics Frame]</div>
<svg style="left:0px;top:0px;" width="768" height="480" viewBox="0 0 768 480"><rect x="254.400" y="393.600" width="18.200" height="10.700" fill="none" stroke="#8fb6f2" stroke-width=".7" stroke-dasharray=".8 1.100"/><rect x="478.300" y="393.300" width="17.200" height="10.300" fill="none" stroke="#8fb6f2" stroke-width=".7" stroke-dasharray=".8 1.100"/></svg>
<div class="t s" style="left:254.3px;top:389px;height:19px;line-height:19px;font-size:13.8px;color:#1a1a1a;transform:scaleX(0.963);">A</div>
<div class="t s" style="left:478.5px;top:389px;height:19px;line-height:19px;font-size:13.8px;color:#1a1a1a;transform:scaleX(0.923);">A</div>
</div></body></html>
